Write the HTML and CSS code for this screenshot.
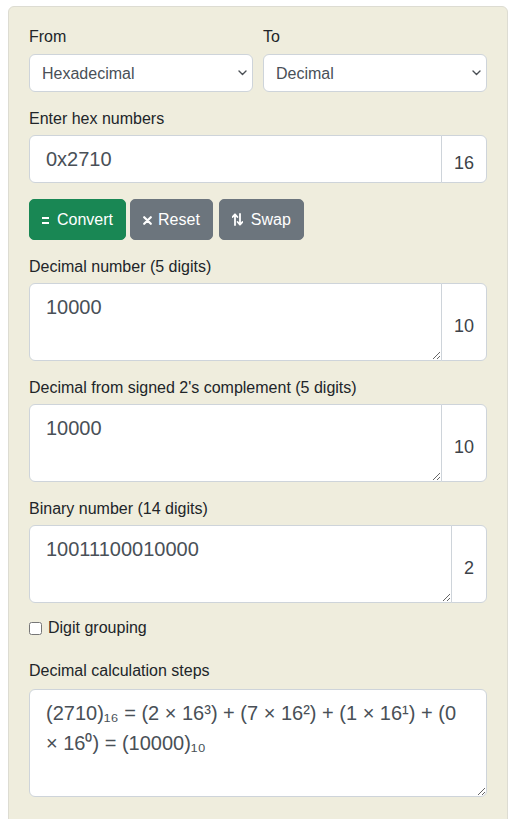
FILE: index.html
```html
<!DOCTYPE html>
<html>
<head>
<meta charset="utf-8">
<link rel="stylesheet" href="styles.css">
</head>
<body>
<div class="card">
  <div class="row2">
    <div class="col">
      <label class="lbl lbl-top">From</label>
      <div class="sel-wrap">
        <select class="sel"><option>Hexadecimal</option></select>
        <svg class="chev" width="9" height="6" viewBox="0 0 9 6"><path d="M1 1 L4.5 4.5 L8 1" stroke="#4a4f55" stroke-width="1.4" fill="none" stroke-linecap="round" stroke-linejoin="round"/></svg>
      </div>
    </div>
    <div class="col">
      <label class="lbl lbl-top">To</label>
      <div class="sel-wrap">
        <select class="sel"><option>Decimal</option></select>
        <svg class="chev" width="9" height="6" viewBox="0 0 9 6"><path d="M1 1 L4.5 4.5 L8 1" stroke="#4a4f55" stroke-width="1.4" fill="none" stroke-linecap="round" stroke-linejoin="round"/></svg>
      </div>
    </div>
  </div>

  <div class="group">
    <label class="lbl">Enter hex numbers</label>
    <div class="ig">
      <input class="ctl" type="text" value="0x2710">
      <span class="addon">16</span>
    </div>
  </div>

  <div class="btns">
    <button class="btn btn-green"><span class="ico ico-eq"><svg width="7" height="9" viewBox="0 0 7 9"><rect x="0" y="1" width="7" height="2" fill="#fff"/><rect x="0" y="6" width="7" height="2" fill="#fff"/></svg></span>Convert</button>
    <button class="btn btn-gray"><span class="ico ico-x"><svg width="9" height="9" viewBox="0 0 9 9"><path d="M1.2 1.2 L7.8 7.8 M7.8 1.2 L1.2 7.8" stroke="#fff" stroke-width="2.2" stroke-linecap="round"/></svg></span>Reset</button>
    <button class="btn btn-gray"><span class="ico ico-sw"><svg width="11" height="13" viewBox="0 0 11 13"><path d="M3 12 V1.5 M0.6 4 L3 1.3 L5.4 4" stroke="#fff" stroke-width="1.8" fill="none" stroke-linecap="round" stroke-linejoin="round"/><path d="M8 1 V11.5 M5.6 9 L8 11.7 L10.4 9" stroke="#fff" stroke-width="1.8" fill="none" stroke-linecap="round" stroke-linejoin="round"/></svg></span>Swap</button>
  </div>

  <div class="group">
    <label class="lbl">Decimal number (5 digits)</label>
    <div class="ig">
      <textarea class="ctl ta" rows="2">10000</textarea>
      <span class="addon">10</span>
    </div>
  </div>

  <div class="group">
    <label class="lbl">Decimal from signed 2's complement (5 digits)</label>
    <div class="ig">
      <textarea class="ctl ta" rows="2">10000</textarea>
      <span class="addon">10</span>
    </div>
  </div>

  <div class="group">
    <label class="lbl">Binary number (14 digits)</label>
    <div class="ig">
      <textarea class="ctl ta" rows="2">10011100010000</textarea>
      <span class="addon">2</span>
    </div>
  </div>

  <div class="check-row">
    <input type="checkbox" class="chk" id="dg"><label for="dg" class="chk-lbl">Digit grouping</label>
  </div>

  <div class="group">
    <label class="lbl lbl-steps">Decimal calculation steps</label>
    <textarea class="ctl ta ta-steps" rows="3">(2710)₁₆ = (2 × 16³) + (7 × 16²) + (1 × 16¹) + (0 × 16⁰) = (10000)₁₀</textarea>
  </div>
</div>
</body>
</html>
```

FILE: styles.css
```css
html, body {
  margin: 0;
  padding: 0;
  background: #ffffff;
}

body {
  font-family: "Liberation Sans", Arial, sans-serif;
  font-size: 16px;
  color: #212529;
}

.card {
  margin: 6px 0 0 8px;
  width: 458px;
  padding: 18px 20px 40px 20px;
  background: #efeddd;
  border: 1px solid #dddcd2;
  border-radius: 6px;
}

.row2 {
  display: grid;
  grid-template-columns: 1fr 1fr;
  gap: 10px;
  margin-bottom: 15px;
}

.col {
  display: flex;
  flex-direction: column;
}

.lbl {
  display: block;
  line-height: 24px;
  margin-bottom: 4px;
}

.lbl-top {
  margin-bottom: 5px;
}

.lbl-steps {
  margin-bottom: 6px;
}

.sel-wrap {
  position: relative;
}

.sel {
  -webkit-appearance: none;
  appearance: none;
  display: block;
  height: 38px;
  width: 100%;
  box-sizing: border-box;
  padding: 0 28px 0 12px;
  font-family: "Liberation Sans", Arial, sans-serif;
  font-size: 16px;
  color: #495057;
  background: #ffffff;
  border: 1px solid #ced4da;
  border-radius: 6px;
  outline: none;
}

.chev {
  position: absolute;
  right: 6px;
  top: 16px;
  pointer-events: none;
}

.group {
  margin-bottom: 15px;
}

.ig {
  display: flex;
  align-items: stretch;
}

.ctl {
  flex: 1 1 auto;
  min-width: 0;
  box-sizing: border-box;
  margin: 0;
  padding: 8px 16px;
  font-family: "Liberation Sans", Arial, sans-serif;
  font-size: 20px;
  line-height: 30px;
  color: #495057;
  background: #ffffff;
  border: 1px solid #ced4da;
  border-radius: 6px 0 0 6px;
  outline: none;
}

input.ctl {
  height: 48px;
}

.ta {
  height: 78px;
  display: block;
  resize: vertical;
}

.ta-steps {
  width: 100%;
  height: 108px;
  border-radius: 6px;
}

.addon {
  display: flex;
  align-items: center;
  box-sizing: border-box;
  padding: 9px 12px 0 12px;
  margin-left: -1px;
  font-size: 18px;
  color: #3d4349;
  background: #ffffff;
  border: 1px solid #ced4da;
  border-radius: 0 6px 6px 0;
}

.btns {
  display: flex;
  gap: 4px;
  margin: 16px 0 15px 0;
}

.btns .btn + .btn + .btn {
  margin-left: 2px;
}

.btn {
  display: inline-flex;
  align-items: center;
  height: 41px;
  box-sizing: border-box;
  padding: 0 12px;
  font-family: "Liberation Sans", Arial, sans-serif;
  font-size: 16px;
  color: #ffffff;
  border: 1px solid transparent;
  border-radius: 5px;
  cursor: pointer;
}

.btn-green {
  background: #198754;
  border-color: #198754;
}

.btn-gray {
  background: #6c757d;
  border-color: #6c757d;
}

.ico {
  display: inline-flex;
  align-items: center;
}

.ico svg {
  display: block;
}

.ico-eq {
  width: 15px;
  padding-top: 1px;
}

.ico-x {
  width: 15px;
  padding-top: 1px;
}

.ico-sw {
  width: 19px;
}

.check-row {
  display: flex;
  align-items: center;
  height: 24px;
  margin: -2px 0 19px 0;
}

.chk {
  width: 13px;
  height: 13px;
  margin: 0 6px 0 0;
}

.chk-lbl {
  line-height: 24px;
}
```
